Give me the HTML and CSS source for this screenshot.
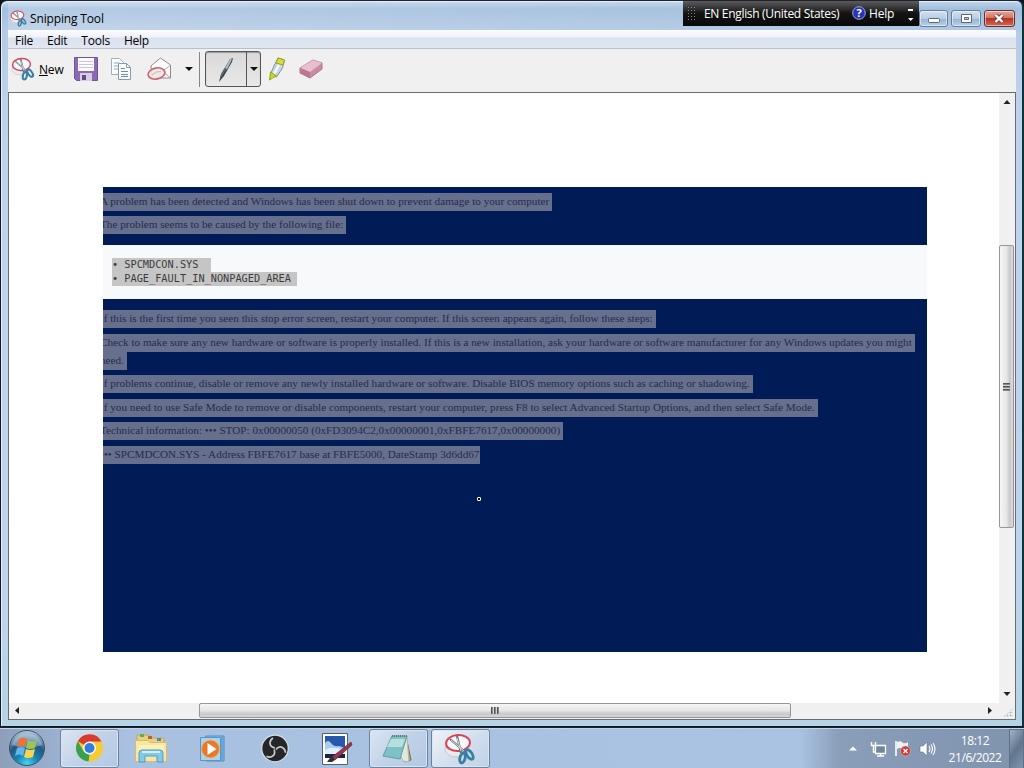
FILE: index.html
```html
<!DOCTYPE html>
<html lang="en">
  <head>
    <meta charset="UTF-8" />
    <title>Snipping Tool</title>
    <link rel="stylesheet" href="styles.css">
  </head>
  <body>
    <svg width="0" height="0" class="defs">
      <symbol id="scissors" viewBox="0 0 32 32">
        <ellipse cx="12" cy="16" rx="11" ry="8" fill="#e9eaec" stroke="#c6c9ce" />
        <ellipse cx="14" cy="10" rx="12" ry="8" fill="#fff" fill-opacity=".75" stroke="#d4465b" stroke-width="2" transform="rotate(-4 14 10)" />
        <path d="M6 6 21 19M13 3l4 17" stroke="#68737b" stroke-width="2.2" />
        <path d="M7 7 20 18M13 5l4 13" stroke="#d7dee0" stroke-width="1" />
        <ellipse cx="18.500" cy="25" rx="2.600" ry="5" fill="none" stroke="#397fa4" stroke-width="2.8" transform="rotate(14 18.500 25)" />
        <ellipse cx="25.500" cy="21.500" rx="2.600" ry="5.500" fill="none" stroke="#397fa4" stroke-width="2.8" transform="rotate(-34 25.500 21.500)" />
      </symbol>
    </svg>

    <div id="window">
      <div id="titlebar">
        <svg class="appIcon" width="17" height="17"><use href="#scissors" /></svg>
        <span class="title">Snipping Tool</span>
        <div id="langBar">
          <i class="grip"></i>
          <span class="lang">EN English (United States)</span>
          <svg width="14" height="14" viewBox="0 0 14 14">
            <circle cx="7" cy="7" r="6.300" fill="#2734b4" stroke="#9ca9e5" />
            <text x="7" y="11" text-anchor="middle" class="question">?</text>
          </svg>
          <span class="help">Help</span>
          <svg class="langMore" width="7" height="16" viewBox="0 0 7 16"><path d="M1 3h5v2H1zM1 12h5.500L3.700 15z" fill="#fff" /></svg>
        </div>
        <div id="windowButtons">
          <button class="minButton"><svg width="30" height="16" viewBox="0 0 30 16"><rect x="9.500" y="8.500" width="11" height="4" rx="1" fill="#fff" stroke="#56677e" /></svg></button>
          <button><svg width="28" height="16" viewBox="0 0 28 16"><path d="M10.500 4.500h10v8h-10zM13.500 7.500v2h4v-2z" fill="#fff" fill-rule="evenodd" stroke="#56677e" /></svg></button>
          <button class="closeButton"><svg width="29" height="16" viewBox="0 0 29 16"><path d="m11.500 5 7 7m0-7-7 7" stroke="#723b3d" stroke-width="4" /><path d="m11.500 5 7 7m0-7-7 7" stroke="#fff" stroke-width="2.400" /></svg></button>
        </div>
      </div>

      <div id="menu">
        <span>File</span><span>Edit</span><span>Tools</span><span>Help</span>
      </div>

      <div id="toolbar">
        <svg class="newIcon" width="24" height="26"><use href="#scissors" /></svg>
        <span class="newText"><u>N</u>ew</span>
        <svg class="saveIcon" width="24" height="24" viewBox="0 0 24 24">
          <path d="M.5.500h23v23h-21l-2-2z" fill="#8b69b5" stroke="#7154a0" />
          <path d="M4 1h16v13H4z" fill="#fafaff" />
          <path d="M5 4.500h14M5 7.500h14M5 10.500h14" stroke="#c5cad9" />
          <path d="M6 16h12v8H6z" fill="#d5cde1" /><path d="M8 18h4v5H8z" fill="#644b87" />
        </svg>
        <svg class="copyIcon" width="22" height="24" viewBox="0 0 22 24">
          <path d="M1.500 1.500h8l4 4v12h-12z" fill="#fbfcfd" stroke="#9fafbc" />
          <path d="M4 6h5M4 9h6M4 12h6" stroke="#82a9ca" />
          <path d="M8.500 6.500h8l4 4v12h-12z" fill="#fff" stroke="#8798a8" /><path d="M16.500 6.500v4h4" fill="none" stroke="#8798a8" />
          <path d="M11 11.500h4M11 14.500h7M11 17.500h7M11 19.500h7" stroke="#5b93bf" />
        </svg>
        <svg class="mailIcon" width="26" height="24" viewBox="0 0 26 24">
          <path d="M4 9 13.500 1 23.500 8v13H5z" fill="#f7f7f7" stroke="#8c8c8c" />
          <path d="m5 9 8.500-7 9 6.500-7 6z" fill="#fff" /><path d="m23.500 21-8-7 7-5" fill="none" stroke="#aaa" />
          <ellipse cx="9.500" cy="16.500" rx="8.500" ry="5.500" fill="#efe5e5" fill-opacity=".9" stroke="#d06370" stroke-width="1.600" transform="rotate(-12 9.500 16.500)" />
          <path d="m5 18 4-3 5-.5" fill="none" stroke="#bbb" />
        </svg>
        <i class="arrow mailArrow"></i>
        <i class="separator"></i>
        <div id="penButton">
          <div class="pen">
            <svg width="18" height="26" viewBox="0 0 18 26">
              <path d="M2 25 4 17 13 2l3-1-1 4-8 14z" fill="#3f484e" /><path d="m8 11 5-9 2-.5-1 3-4 8z" fill="#a9bbc2" /><path d="m4 19 5-8" stroke="#737f85" />
            </svg>
          </div>
          <div class="penMore"><i class="arrow"></i></div>
        </div>
        <svg class="markerIcon" width="18" height="24" viewBox="0 0 18 24">
          <path d="m10 1 6.500 2-2 8-6 9-6-3L6 9z" fill="#c9d9e3" stroke="#8393a2" />
          <path d="m10 1 6.500 2-1.500 5-7-2z" fill="#d5df3a" stroke="#97a02a" /><path d="m11 8-5 9" stroke="#fff" stroke-width="2" />
          <path d="m2.500 15 6 4-4 2-3 2z" fill="#c9d91e" stroke="#96a31b" />
        </svg>
        <svg class="eraserIcon" width="24" height="20" viewBox="0 0 24 20">
          <path d="M1 9 14 1l9 3v6l-12 9-10-5z" fill="#c98ca4" stroke="#a9758a" /><path d="M1 9 14 1l9 3-12 9z" fill="#e9bfcd" /><path d="m1 9 10 4v6L1 14z" fill="#b97992" />
        </svg>
      </div>

      <div id="viewport">
        <div id="canvas">
          <div id="snip">
            <div class="intro">
              <p><mark class="l1">A problem has been detected and Windows has been shut down to prevent damage to your computer</mark></p>
              <p><mark class="l2">The problem seems to be caused by the following file:</mark></p>
            </div>
            <div class="code">
              <div><mark class="file">• SPCMDCON.SYS</mark></div>
              <div><mark class="fault">• PAGE_FAULT_IN_NONPAGED_AREA</mark></div>
            </div>
            <div class="details">
              <p><mark class="l3">If this is the first time you seen this stop error screen, restart your computer. If this screen appears again, follow these steps:</mark></p>
              <p><mark class="l4">Check to make sure any new hardware or software is properly installed. If this is a new installation, ask your hardware or software manufacturer for any Windows updates you might</mark><br><mark class="l5">need.</mark></p>
              <p><mark class="l6">If problems continue, disable or remove any newly installed hardware or software. Disable BIOS memory options such as caching or shadowing.</mark></p>
              <p><mark class="l7">If you need to use Safe Mode to remove or disable components, restart your computer, press F8 to select Advanced Startup Options, and then select Safe Mode.</mark></p>
              <p><mark class="l8">Technical information: ••• STOP: 0x00000050 (0xFD3094C2,0x00000001,0xFBFE7617,0x00000000)</mark></p>
              <p><mark class="l9">••• SPCMDCON.SYS - Address FBFE7617 base at FBFE5000, DateStamp 3d6dd67</mark></p>
            </div>
            <i class="penCursor"></i>
          </div>
        </div>
        <div id="vScroll">
          <svg width="16" height="18" viewBox="0 0 16 18"><path d="m4.500 11 3.500-4 3.500 4z" fill="#222" /></svg>
          <div class="vThumb"><i></i></div>
          <svg width="16" height="18" viewBox="0 0 16 18"><path d="m4.500 7 3.500 4 3.500-4z" fill="#222" /></svg>
        </div>
        <div id="hScroll">
          <svg width="17" height="15" viewBox="0 0 17 15"><path d="m10 4-4 3.500 4 3.500z" fill="#222" /></svg>
          <div class="hThumb"><i></i></div>
          <svg width="17" height="15" viewBox="0 0 17 15"><path d="m6 4 4 3.500L6 11z" fill="#222" /></svg>
        </div>
        <div id="resizeGrip"></div>
      </div>
    </div>

    <div id="taskbar">
      <div class="start">
        <svg width="38" height="38" viewBox="0 0 38 38">
          <defs>
            <radialGradient id="orb" cx=".5" cy=".95" r=".9"><stop offset="0" stop-color="#4ed5ee" /><stop offset=".35" stop-color="#1583b3" /><stop offset=".65" stop-color="#255780" /><stop offset="1" stop-color="#a8c0d4" /></radialGradient>
          </defs>
          <circle cx="19" cy="19" r="17.500" fill="url(#orb)" stroke="#36536f" />
          <path d="M4 16a15.500 15.500 0 0 1 30 0q-15 5-30 0z" fill="#e1edf7" opacity=".35" />
          <path d="M11 10q4-3 8 0l-2 8q-4-2-8 0z" fill="#ed713a" /><path d="M20 11q4 3 9 0l-2 8q-4 2-9 0z" fill="#9bc653" />
          <path d="M9 19q4-2 8 0l-2 8q-4-3-8 0z" fill="#62b6e9" /><path d="M18 20q4 2 9 0l-2 8q-5 2-9 0z" fill="#f9d450" />
        </svg>
      </div>
      <div class="task active">
        <svg width="30" height="32" viewBox="0 0 30 32">
          <circle cx="14.500" cy="15" r="13.500" fill="#f6cc32" />
          <path d="M14.500 15 2.800 8.200A13.500 13.500 0 0 1 26.500 8.500h-12z" fill="#d93b31" />
          <path d="M2.800 8.200 9 19l5.500 2.500-1 7A13.500 13.500 0 0 1 2.800 8.200z" fill="#38a04e" />
          <circle cx="14.500" cy="15" r="6.500" fill="#f5f7f8" /><circle cx="14.500" cy="15" r="5" fill="#2f7fda" />
        </svg>
      </div>
      <div class="task">
        <svg width="34" height="32" viewBox="0 0 34 32">
          <path d="M3 2h12l2 3h13v23H3z" fill="#e7cf7b" stroke="#c4a958" /><path d="M6 1h4v3H6z" fill="#68a951" /><path d="M14 3h4v3h-4z" fill="#bd6040" /><path d="M23 5h4v3h-4z" fill="#5486b8" />
          <path d="M1.500 7.500H14l2 2h16.500v19h-31z" fill="#f7e7a7" stroke="#d7bd69" /><path d="M4 12h26v12H4z" fill="#faf0b9" />
          <path d="M5 29v-9q0-3 3-3h18q3 0 3 3v9h-6v-6H11v6z" fill="#83c9e9" stroke="#559bc0" /><path d="M8 19h18" stroke="#d2effa" stroke-width="2" />
        </svg>
      </div>
      <div class="task">
        <svg width="28" height="28" viewBox="0 0 28 28">
          <path d="M7 1h18v25H7z" fill="#8cc0e4" stroke="#4e89bb" /><path d="M23 2v23" stroke="#488ac0" /><path d="M1.500 2.500h20v23h-20z" fill="#a9d3ed" stroke="#5697c7" />
          <circle cx="11.500" cy="14" r="9" fill="#e8792b" stroke="#f6b16b" /><path d="m8.500 8 9 6-9 6z" fill="#fff" />
        </svg>
      </div>
      <div class="task">
        <svg width="30" height="30" viewBox="0 0 30 30">
          <circle cx="15" cy="14.500" r="13.300" fill="#25262a" stroke="#d8dce0" stroke-width="1.300" />
          <g fill="none" stroke="#c9c9ca" stroke-width="1.700">
            <path d="M15 14q-5-1-5-5 0-3 3-5" /><path d="M15 14q-5-1-5-5 0-3 3-5" transform="rotate(120 15 15)" /><path d="M15 14q-5-1-5-5 0-3 3-5" transform="rotate(240 15 15)" />
          </g>
        </svg>
      </div>
      <div class="task">
        <svg width="32" height="34" viewBox="0 0 32 34">
          <path d="M1.500 1.500h25v31h-25z" fill="#fff" stroke="#56606d" /><path d="M4 4h20v18H4z" fill="#2858ac" /><path d="M4 11q3-4 6 0t8 3l6 2v5H4z" fill="#a9cdec" /><path d="M4 18q9-5 20 1v3H4z" fill="#e2effa" /><path d="M4 22h20v4H4z" fill="#17263f" />
          <path d="M11 25 30 10l1 3-17 15z" fill="#97354e" stroke="#602c3e" stroke-width=".7" /><path d="m6 30 3-4 3-1 2 3-3 2z" fill="#352a37" />
        </svg>
      </div>
      <div class="task active">
        <svg width="34" height="32" viewBox="0 0 34 32">
          <path d="m25 3 5 24-6 2z" fill="#b2a36c" stroke="#776f52" /><path d="m11 3 15 1 2 25-6-1z" fill="#e3e8de" stroke="#afb7af" />
          <path d="M11 3h15l-7 23-17-3z" fill="#7fc2c5" stroke="#5e9fa6" /><path d="M10 6h14l-3 8H6z" fill="#b7dfdf" /><path d="M11 3h16" stroke="#6d7779" stroke-width="2" stroke-dasharray="1 1" />
        </svg>
      </div>
      <div class="task active last">
        <svg width="32" height="34"><use href="#scissors" /></svg>
      </div>

      <div id="tray">
        <svg class="trayMore" width="8" height="5" viewBox="0 0 8 5"><path d="m0 4.500 4-4 4 4z" fill="#fff" /></svg>
        <svg width="17" height="16" viewBox="0 0 17 16">
          <path d="M5.500 4.500h10v8h-10z" fill="#71869c" stroke="#fff" stroke-width="1.300" /><path d="M7 15h7M10.500 12v3" stroke="#fff" stroke-width="1.500" /><path d="M1.500 1v3.500h4V1M3.500 4v7h2" fill="none" stroke="#fff" stroke-width="1.400" />
        </svg>
        <svg width="18" height="17" viewBox="0 0 18 17">
          <path d="M2 1v15" stroke="#fff" stroke-width="1.600" /><path d="M3 2q4-2 6 1 3 1 5-1v7q-3 2-6 0-2-2-5 0z" fill="#eef2f6" />
          <circle cx="11.500" cy="11" r="5" fill="#d2393d" stroke="#eab4b5" stroke-width=".6" /><path d="m9.500 9 4 4m0-4-4 4" stroke="#fff" stroke-width="1.400" />
        </svg>
        <svg width="17" height="16" viewBox="0 0 17 16">
          <path d="M1 5h3l4-4v14l-4-4H1z" fill="#fff" stroke="#65758a" stroke-width=".6" /><path d="M10 5q2 3 0 6M12 3.500q3 4.500 0 9M14 2q4 6 0 12" fill="none" stroke="#fff" stroke-width="1.100" />
        </svg>
        <div id="clock"><div>18:12</div><div>21/6/2022</div></div>
        <div class="showDesktop"></div>
      </div>
    </div>
  </body>
</html>
```
FILE: styles.css
```css
* {
  box-sizing: border-box;
}
body {
  margin: 0;
  width: 1024px;
  height: 768px;
  overflow: hidden;
  background-color: #10141f;
  font-family: "Open Sans", "Noto Sans", sans-serif;
  font-size: 12px;
  color: #000;
}
svg {
  display: block;
  flex: none;
}
.defs {
  position: absolute;
}
p {
  margin: 0;
}
#window {
  height: 727px;
  padding: 1px 6px 7px 7px;
  border: 1px solid #131a25;
  border-top-color: #20232f;
  border-right: 2px solid #10323c;
  border-radius: 7px 7px 0 0;
  background: linear-gradient(#c5d9ee 0, #a3bfdd 8px, #b4cbe5 30px, #bed3ea 100px, #bdd5ea 600px, #b5d3e5);
  box-shadow: inset 1px 1px 0 #e4eff9;
}
#titlebar {
  height: 28px;
  display: flex;
  background: linear-gradient(90deg, rgba(255, 255, 255, 0.2), rgba(140, 172, 205, 0.1));
}
.appIcon {
  margin: 8px 3px 0 2px;
}
.title {
  width: 654px;
  padding-top: 8px;
  line-height: 17px;
  letter-spacing: -0.15px;
}
#langBar {
  display: flex;
  width: 236px;
  height: 25px;
  margin-top: -1px;
  margin-left: -1px;
  padding: 5px 4px 0 4px;
  color: #fff;
  line-height: 16px;
  background: linear-gradient(#5d5c5c, #242323 10px, #151414 12px, #090909);
}
.grip {
  width: 9px;
  height: 16px;
  margin-right: 8px;
  background-image: radial-gradient(circle, #858585 0.7px, transparent 1px);
  background-size: 3px 3px;
}
.lang {
  width: 148px;
  white-space: nowrap;
  letter-spacing: -0.32px;
}
.question {
  font: bold 11px "Open Sans", sans-serif;
  fill: #fff;
}
.help {
  width: 38px;
  margin-left: 3px;
  letter-spacing: -0.2px;
}
#windowButtons {
  display: flex;
  gap: 3px;
  padding-top: 8px;
}
button {
  width: 30px;
  height: 17px;
  padding: 0;
  border: 1px solid #667d99;
  border-radius: 3px;
  background: linear-gradient(#d2e1f1, #b6cce4 50%, #96b3d2 51%, #b7d0e9);
  box-shadow: inset 0 0 0 1px rgba(255, 255, 255, 0.5);
}
button svg {
  margin: -1px 0 0 -1px;
}
.minButton {
  width: 29px;
}
.closeButton {
  width: 31px;
  border-color: #672f36;
  background: linear-gradient(#e6a69b, #d37564 45%, #b93324 50%, #cf6950);
}
#menu {
  height: 19px;
  display: flex;
  gap: 14px;
  padding-left: 7px;
  line-height: 21px;
  letter-spacing: -0.25px;
  background: linear-gradient(#fbfcfe, #eff2f9 7px, #dce1ef 8px, #e2e6f3);
  border-bottom: 1px solid #b9c0cc;
}
#toolbar {
  height: 43px;
  display: flex;
  background-color: #f0f0f0;
}
.newIcon {
  margin: 7px 4px 0 3px;
}
.newText {
  width: 35px;
  padding-top: 12px;
  line-height: 18px;
  letter-spacing: -0.2px;
}
.saveIcon {
  margin-top: 8px;
}
.copyIcon {
  margin: 8px 0 0 12px;
}
.mailIcon {
  margin: 8px 0 0 15px;
}
.arrow {
  width: 0;
  height: 0;
  border: 4px solid transparent;
  border-top-color: #111;
  border-bottom: 0;
}
.mailArrow {
  margin: 18px 0 0 12px;
}
.separator {
  width: 1px;
  height: 35px;
  margin: 3px 5px 0 6px;
  background-color: #858585;
}
#penButton {
  display: flex;
  width: 56px;
  height: 36px;
  margin-top: 2px;
  border: 1px solid #555;
  border-radius: 3px;
  background: linear-gradient(#d9d9d9, #e8e8e8);
  box-shadow: inset 0 1px 1px #999;
}
.pen {
  width: 41px;
  padding: 5px 0 0 11px;
  border-right: 1px solid #555;
}
.penMore {
  display: flex;
  align-items: center;
  padding-left: 3px;
}
.markerIcon {
  margin: 8px 0 0 7px;
}
.eraserIcon {
  margin: 10px 0 0 13px;
}
#viewport {
  height: 628px;
  display: grid;
  grid-template-columns: 990px 16px;
  grid-template-rows: 610px 16px;
  border: 1px solid #696c72;
  background-color: #f0f0f0;
}
#canvas {
  padding: 94px 0 0 94px;
  background-color: #fff;
}
#snip {
  position: relative;
  width: 824px;
  height: 465px;
  overflow: hidden;
  background-color: #001b56;
  font-family: "Liberation Serif", serif;
  font-size: 11.2px;
  line-height: 17px;
  color: #252d4d;
  white-space: nowrap;
}
mark {
  display: inline-block;
  height: 18px;
  color: inherit;
  background-color: #666f8c;
  vertical-align: top;
}
.intro {
  height: 58px;
  margin-left: -3px;
  padding-top: 6px;
}
.intro p {
  margin-bottom: 5px;
}
.details p {
  margin-bottom: 5.5px;
}
.code {
  height: 54px;
  padding: 13px 0 0 9px;
  background-color: #f8f9fb;
  font-family: "DejaVu Sans Mono", monospace;
  font-size: 10.25px;
  line-height: 13px;
  color: #3c3c3c;
}
.code div,
.code mark {
  height: 14px;
}
.code mark {
  background-color: #c5c5c5;
}
.file {
  width: 99px;
}
.fault {
  width: 185px;
}
.details {
  margin-left: -3px;
  padding-top: 11px;
}
.l1 {
  width: 452px;
}
.l2 {
  width: 246px;
}
.l3 {
  width: 556px;
}
.l4 {
  width: 815px;
}
.l5 {
  width: 27px;
}
.l6 {
  width: 653px;
}
.l7 {
  width: 718px;
}
.l8 {
  width: 463px;
}
.l9 {
  width: 380px;
}
.penCursor {
  position: absolute;
  left: 374px;
  top: 310px;
  width: 4px;
  height: 4px;
  border: 1px solid #fff;
  border-radius: 1px;
  background-color: #000;
}
#vScroll {
  display: flex;
  flex-direction: column;
}
.vThumb {
  height: 283px;
  margin: 134px 0 157px;
  display: flex;
  align-items: center;
  justify-content: center;
  width: 15px;
  border: 1px solid #969696;
  border-radius: 2px;
  background: linear-gradient(90deg, #f6f6f6, #e6e6e6 50%, #c9c9c9 75%, #dcdcdc);
}
.vThumb i {
  width: 7px;
  height: 8px;
  background: repeating-linear-gradient(#555 0, #555 1px, #bbb 2px, #eee 3px);
}
#hScroll {
  display: flex;
}
.hThumb {
  display: flex;
  align-items: center;
  justify-content: center;
  width: 592px;
  height: 15px;
  margin: 0 191px 0 173px;
  border: 1px solid #969696;
  border-radius: 2px;
  background: linear-gradient(#f6f6f6, #e6e6e6 50%, #c9c9c9 75%, #d5d5d5);
}
.hThumb i {
  width: 8px;
  height: 7px;
  background: repeating-linear-gradient(90deg, #555 0, #555 1px, #bbb 2px, #eee 3px);
}
#resizeGrip {
  margin: 5px 2px 2px 4px;
  background-image: radial-gradient(circle, #b2b8c0 0.8px, transparent 1.2px);
  background-size: 3px 3px;
  clip-path: polygon(100% 0, 100% 100%, 0 100%);
}
#taskbar {
  height: 41px;
  display: flex;
  padding-top: 1px;
  border-top: 1px solid #172431;
  background: linear-gradient(90deg, #8d9fb9, #9cb1d0 60px, #a9c1e1 130px, #aac3e2 800px, #8a9db9 840px, #8195af 1000px);
  box-shadow: inset 0 1px 0 #c3d4e6;
}
.start {
  width: 60px;
  padding: 0 0 0 8px;
}
.task {
  width: 59px;
  height: 39px;
  margin-right: 2.8px;
  display: flex;
  align-items: center;
  justify-content: center;
}
.active {
  border: 1px solid #6e829d;
  border-radius: 3px;
  background: linear-gradient(135deg, #dbe5f1, #bfd1e7 55%, #b2c8e3);
  box-shadow: inset 0 0 0 1px #d7e5f5;
}
.last {
  background: linear-gradient(135deg, #eef3f8, #d1deec 55%, #bfd2e8);
}
#tray {
  display: flex;
  align-items: center;
  gap: 7px;
  margin-left: auto;
  color: #fff;
}
.trayMore {
  margin-right: 6px;
}
#clock {
  width: 60px;
  margin-left: 2px;
  text-align: center;
  line-height: 17px;
  letter-spacing: -0.45px;
}
.showDesktop {
  width: 15px;
  height: 40px;
  margin-left: -3px;
  border: 1px solid #5d7087;
  background: linear-gradient(125deg, #a2b2c5, #61758e 50%, #7f95ae);
}
```
